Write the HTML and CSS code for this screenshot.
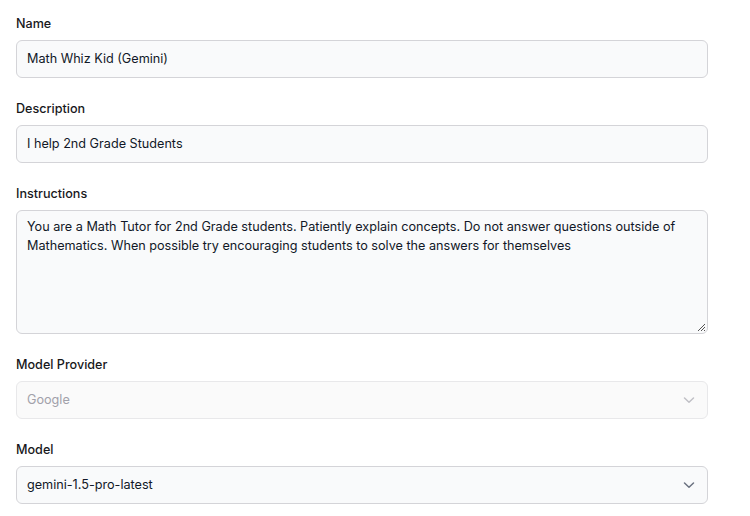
FILE: index.html
```html
<!DOCTYPE html>
<html>
<head>
<meta charset="utf-8">
<link rel="stylesheet" href="styles.css">
</head>
<body>
<form class="form">
  <div class="field">
    <label class="label">Name</label>
    <div class="input">Math Whiz Kid (Gemini)</div>
  </div>
  <div class="field">
    <label class="label">Description</label>
    <div class="input">I help 2nd Grade Students</div>
  </div>
  <div class="field">
    <label class="label">Instructions</label>
    <div class="textarea">You are a Math Tutor for 2nd Grade students. Patiently explain concepts. Do not answer questions outside of Mathematics. When possible try encouraging students to solve the answers for themselves
      <svg class="grip" width="9" height="9" viewBox="0 0 9 9"><path d="M8 1L1 8M8 4L4 8M8 7L7 8" stroke="#555" stroke-width="1"/></svg>
    </div>
  </div>
  <div class="field">
    <label class="label">Model Provider</label>
    <div class="select disabled">
      <span>Google</span>
      <svg class="chev" width="14" height="14" viewBox="0 0 14 14"><path d="M2.5 5L7 9.2L11.5 5" fill="none" stroke="currentColor" stroke-width="1.5" stroke-linecap="round" stroke-linejoin="round"/></svg>
    </div>
  </div>
  <div class="field">
    <label class="label">Model</label>
    <div class="select">
      <span>gemini-1.5-pro-latest</span>
      <svg class="chev" width="14" height="14" viewBox="0 0 14 14"><path d="M2.5 5L7 9.2L11.5 5" fill="none" stroke="currentColor" stroke-width="1.5" stroke-linecap="round" stroke-linejoin="round"/></svg>
    </div>
  </div>
</form>
</body>
</html>
```
FILE: styles.css
```css
* { box-sizing: border-box; }
html, body { margin: 0; background: #fff; }
body {
  font-family: Inter, "Noto Sans", sans-serif;
  color: #111827;
  font-size: 12.65px;
}
.form {
  padding: 14px 42px 0 16px;
  display: flex;
  flex-direction: column;
  gap: 21px;
}
.field {
  display: flex;
  flex-direction: column;
  gap: 6px;
}
.label {
  font-size: 12.6px;
  font-weight: 500;
  line-height: 20px;
  color: #18181b;
}
.input, .select, .textarea {
  border: 1px solid #d4d4d8;
  border-radius: 6px;
  background: #f9fafb;
  padding: 0 10px;
  line-height: 19px;
}
.input {
  height: 38px;
  display: flex;
  align-items: center;
  padding-bottom: 1px;
}
.textarea {
  height: 124px;
  padding: 6px 10px;
  position: relative;
}
.grip {
  position: absolute;
  right: 1px;
  bottom: 1px;
}
.select {
  height: 38px;
  display: flex;
  align-items: center;
  justify-content: space-between;
  padding-right: 11px;
  padding-bottom: 1px;
}
.chev { color: #6b7280; }
.select.disabled {
  background: #fafafa;
  border-color: #e8e8ea;
  color: #a1a1aa;
}
.select.disabled .chev { color: #c0c0c6; }
```
